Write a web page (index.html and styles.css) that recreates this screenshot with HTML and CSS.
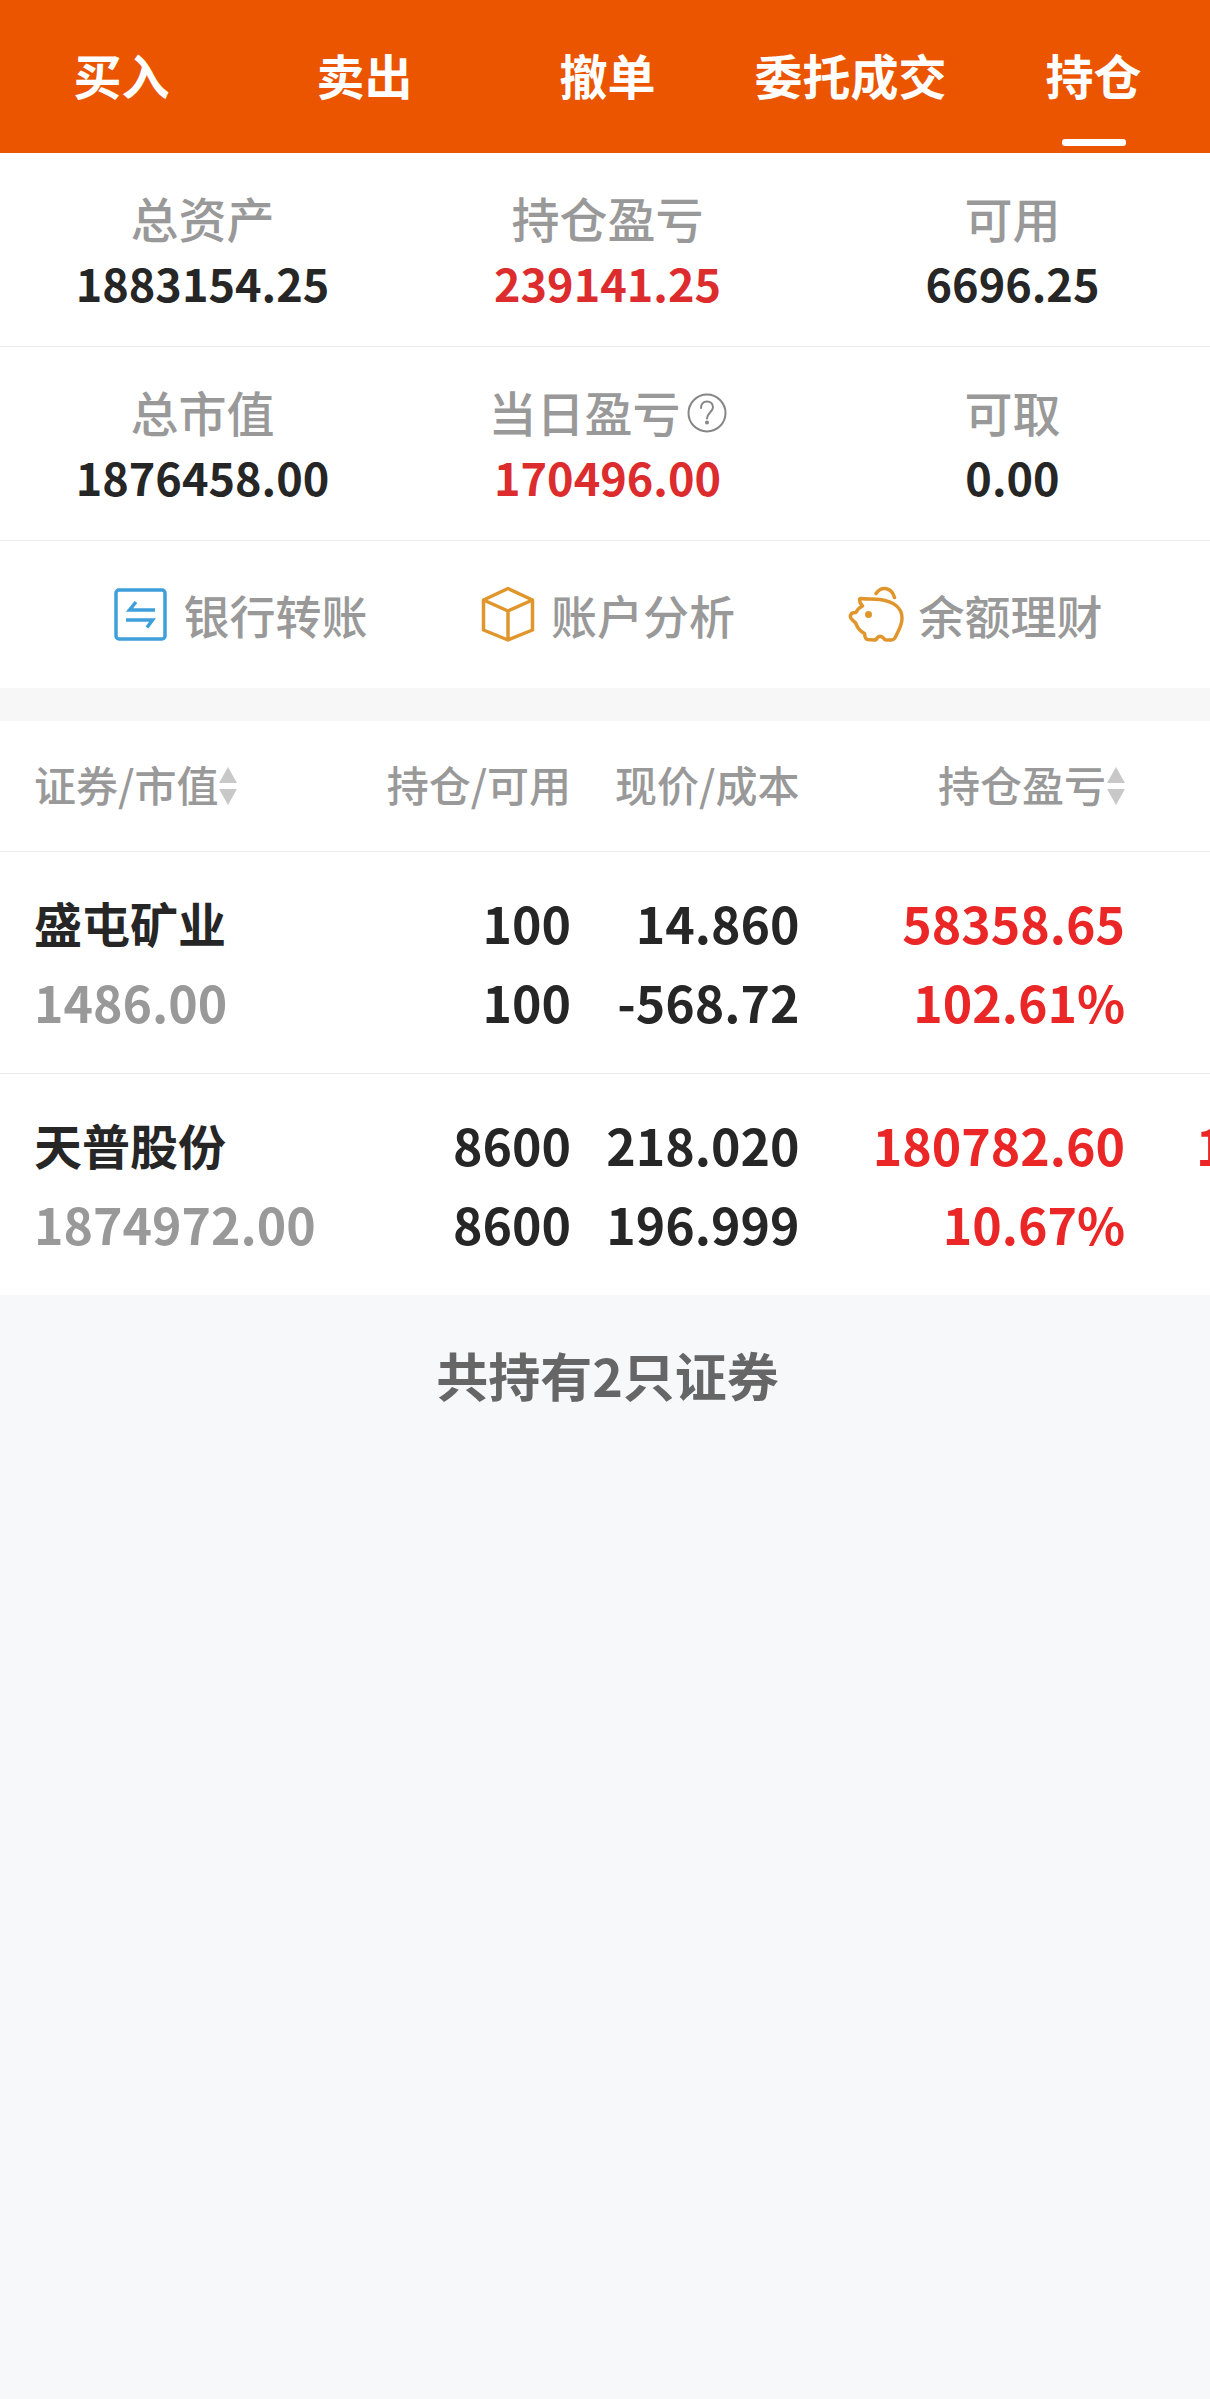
FILE: index.html
```html
<!DOCTYPE html>
<html lang="zh-CN">
<head>
<meta charset="utf-8">
<meta name="viewport" content="width=device-width, initial-scale=1">
<title>持仓</title>
<link rel="stylesheet" href="styles.css">
</head>
<body>
<div class="viewport">
<div class="screen">
  <nav class="tabs">
    <a class="tab" href="#buy">买入</a>
    <a class="tab" href="#sell">卖出</a>
    <a class="tab" href="#cancel">撤单</a>
    <a class="tab" href="#orders">委托成交</a>
    <a class="tab tab-active" href="#positions" aria-current="page">持仓</a>
  </nav>

  <main>
    <dl class="summary">
      <div class="stat"><dt>总资产</dt><dd>1883154.25</dd></div>
      <div class="stat"><dt>持仓盈亏</dt><dd class="up">239141.25</dd></div>
      <div class="stat"><dt>可用</dt><dd>6696.25</dd></div>
    </dl>
    <dl class="summary">
      <div class="stat"><dt>总市值</dt><dd>1876458.00</dd></div>
      <div class="stat">
        <dt>当日盈亏
          <button class="help" type="button">
            <svg viewBox="0 0 40 40" width="40" height="40" fill="none" stroke="#868686" stroke-width="2" stroke-linecap="round" aria-hidden="true">
              <circle cx="20" cy="20" r="18.5"/>
              <path d="M14 15c0-4 2.500-6.500 6-6.500s6 2.300 6 5.700c0 5-6 5.800-6 11.300"/>
              <circle cx="20" cy="29.500" r="1" fill="#868686"/>
            </svg>
          </button>
        </dt>
        <dd class="up">170496.00</dd>
      </div>
      <div class="stat"><dt>可取</dt><dd>0.00</dd></div>
    </dl>

    <div class="actions">
      <a class="action" href="#transfer">
        <svg class="action-icon" viewBox="0 0 56 56" fill="none" stroke="#3f9fdb" stroke-width="3.500" aria-hidden="true">
          <rect x="3" y="4" width="49" height="49" rx="3"/>
          <path d="M42 24H16.500L23 16M13 34h26.500L34 41.500"/>
        </svg>
        银行转账
      </a>
      <a class="action" href="#analysis">
        <svg class="action-icon" viewBox="0 0 56 56" fill="none" stroke="#e0962c" stroke-width="3.500" stroke-linejoin="round" aria-hidden="true">
          <path d="M28 2.500 52.500 14v30L28 54 3.500 44V14zM3.500 14 28 25l24.500-11M28 25v29"/>
        </svg>
        账户分析
      </a>
      <a class="action" href="#savings">
        <svg class="action-icon" viewBox="0 0 56 56" fill="none" stroke="#e0962c" stroke-width="3.500" stroke-linecap="round" stroke-linejoin="round" aria-hidden="true">
          <path d="M13 12.500C20 13.500 25 12.500 32 13.500 46 15.500 54 22 54 32 54 40 50.500 44 48 50Q46.500 54 43 54H38.500Q36.500 54 35.500 52 32 49 29.500 51.500 28.500 54 26 54L19.500 53.500Q17 53 16.500 47.500 11 44.500 9 40 8 36.500 5 34.500 1 31.500 3 28.500 3.500 26.500 8 26.500 9.500 22.500 14.500 20 11.500 17 11.500 14Q11.500 12.500 13 12.500Z"/>
          <path d="M28 7.500C34-1 44 2 46.500 11.500"/>
          <circle cx="20.500" cy="28.500" r="2.500" fill="#e0962c" stroke-width="2"/>
        </svg>
        余额理财
      </a>
    </div>

    <table class="holdings">
      <colgroup>
        <col class="col-name"><col class="col-qty"><col class="col-price"><col class="col-profit"><col class="col-more">
      </colgroup>
      <thead>
        <tr>
          <th scope="col"><button class="sort" type="button">证券/市值<svg viewBox="0 0 18 38" width="18" height="38" fill="#c8c8c8" aria-hidden="true"><path d="M9 0l9 16H0zM9 38l9-16H0z"/></svg></button></th>
          <th scope="col">持仓/可用</th>
          <th scope="col">现价/成本</th>
          <th scope="col"><button class="sort" type="button">持仓盈亏<svg viewBox="0 0 18 38" width="18" height="38" fill="#c8c8c8" aria-hidden="true"><path d="M9 0l9 16H0zM9 38l9-16H0z"/></svg></button></th>
          <td></td>
        </tr>
      </thead>
      <tbody>
        <tr>
          <td><span class="name">盛屯矿业</span><span class="muted">1486.00</span></td>
          <td><span>100</span><span>100</span></td>
          <td><span>14.860</span><span>-568.72</span></td>
          <td class="up"><span>58358.65</span><span>102.61%</span></td>
          <td></td>
        </tr>
        <tr>
          <td><span class="name">天普股份</span><span class="muted">1874972.00</span></td>
          <td><span>8600</span><span>8600</span></td>
          <td><span>218.020</span><span>196.999</span></td>
          <td class="up"><span>180782.60</span><span>10.67%</span></td>
          <td class="up"><span>1</span></td>
        </tr>
      </tbody>
    </table>
    <p class="total">共持有2只证券</p>
  </main>
</div>
</div>
</body>
</html>
```

FILE: styles.css
```css
* {
  box-sizing: border-box;
}

body {
  margin: 0;
  background: #f7f8fa;
  color: #262626;
  font-family: "Noto Sans CJK SC", "Noto Sans", sans-serif;
  font-weight: 500;
}

button {
  padding: 0;
  border: 0;
  background: none;
  color: inherit;
  font: inherit;
}

a {
  color: inherit;
  text-decoration: none;
}

svg {
  display: block;
  flex: none;
}

.viewport {
  overflow: hidden;
}

/* The content runs slightly past the right edge of the window. */
.screen {
  margin-right: -5px;
}

/* Top tabs */
.tabs {
  display: flex;
  background: #eb5500;
  color: #fff;
}

.tab {
  display: flex;
  flex: 1 1 0;
  flex-direction: column;
  align-items: center;
  padding: 38px 0 7px;
  font-size: 48px;
  font-weight: 700;
  line-height: 72px;
  white-space: nowrap;
}

.tab::after {
  content: "";
  width: 64px;
  height: 7px;
  margin-top: 29px;
  border-radius: 3px;
}

.tab-active::after {
  background: #fff;
}

/* Account summary */
.summary {
  display: grid;
  grid-template-columns: repeat(3, 1fr);
  margin: 0;
  padding: 31px 0;
  border-bottom: 1px solid #ececec;
  background: #fff;
  text-align: center;
}

.stat dt {
  display: flex;
  align-items: center;
  justify-content: center;
  gap: 6px;
  color: #999;
  font-size: 48px;
  line-height: 66px;
}

.help {
  padding-top: 4px;
}

.stat dd {
  margin: 0;
  font-size: 45px;
  font-weight: 700;
  line-height: 65px;
}

.stat .up {
  color: #dc2c2e;
}

.up {
  color: #ea2626;
}

/* Shortcuts */
.actions {
  display: flex;
  justify-content: space-evenly;
  padding: 39px 0 40px;
  border-bottom: 33px solid #f7f7f7;
  background: #fff;
}

.action {
  display: flex;
  align-items: center;
  gap: 15px;
  color: #999;
  font-size: 46px;
  line-height: 68px;
}

.action-icon {
  width: 56px;
  height: 56px;
}

/* Holdings */
.holdings {
  width: 100%;
  table-layout: fixed;
  border-collapse: collapse;
  background: #fff;
  text-align: right;
  white-space: nowrap;
}

.col-name {
  width: 28.1%;
}

.col-qty {
  width: 18.9%;
}

.col-price {
  width: 18.8%;
}

.col-profit {
  width: 26.8%;
}

.holdings th,
.holdings td {
  padding: 0;
}

.holdings th:first-child,
.holdings td:first-child {
  padding-left: 34px;
  text-align: left;
}

.holdings td:last-child {
  padding-left: 71px;
  text-align: left;
}

.holdings tr {
  border-bottom: 1px solid #ececec;
}

.holdings tbody tr:last-child {
  border-bottom: 0;
}

.holdings th {
  height: 130px;
  padding-bottom: 4px;
  color: #999;
  font-size: 42px;
  font-weight: 500;
  line-height: 64px;
}

.sort {
  display: inline-flex;
  align-items: center;
  gap: 1px;
  vertical-align: top;
}

.sort svg {
  margin-top: 4px;
}

.holdings tbody td {
  padding-top: 31px;
  padding-bottom: 32px;
  font-size: 50px;
  font-weight: 700;
  line-height: 79px;
  vertical-align: top;
}

.holdings span {
  display: block;
}

.holdings .name {
  font-size: 48px;
}

.muted {
  color: #999;
}

.total {
  margin: 0;
  padding: 42px 0;
  color: #666;
  font-size: 52px;
  font-weight: 700;
  line-height: 76px;
  text-align: center;
}
```
